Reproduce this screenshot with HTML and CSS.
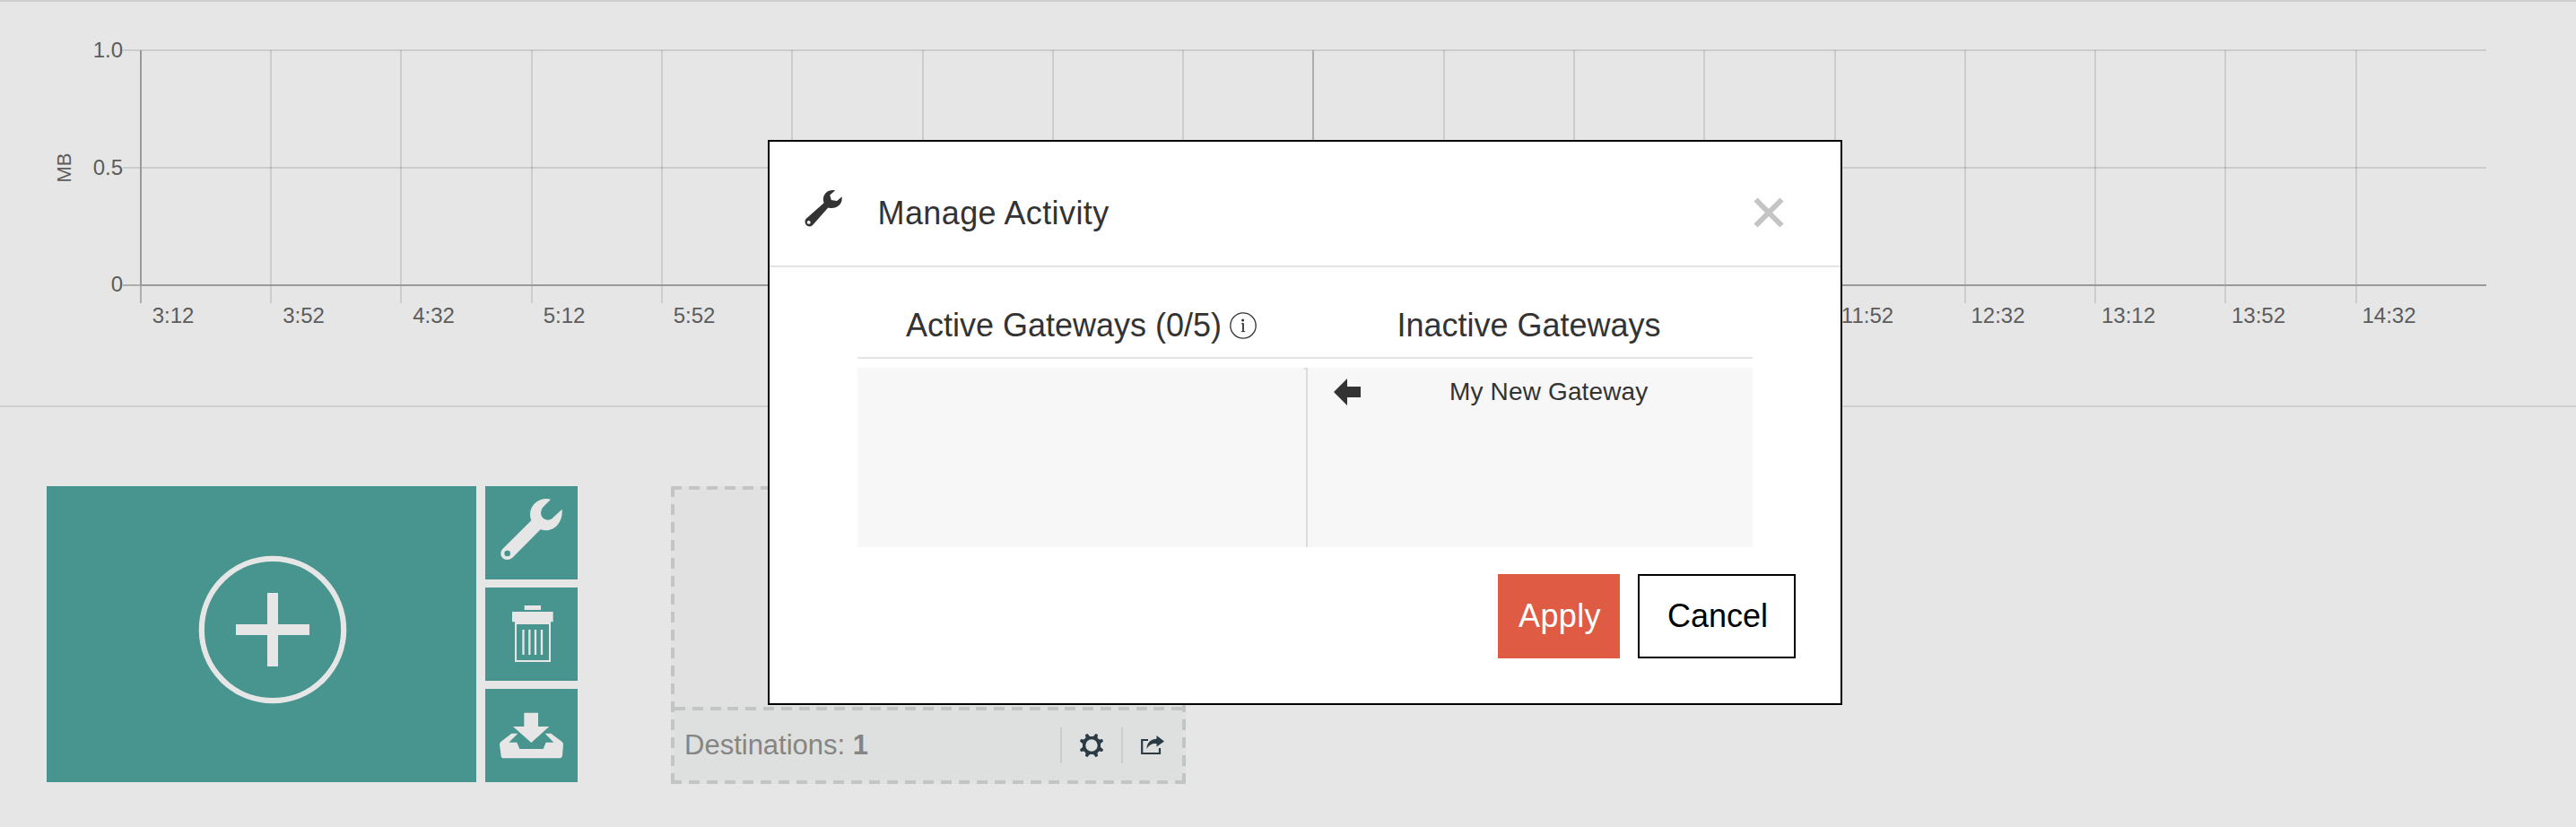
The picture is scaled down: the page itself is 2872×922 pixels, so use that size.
FILE: index.html
```html
<!DOCTYPE html>
<html lang="en">
<head>
<meta charset="utf-8">
<title>Manage Activity</title>
<link rel="stylesheet" href="styles.css">
</head>
<body>
<section class="chart-section">
  <svg class="chart" viewBox="0 0 2872 450" width="2872" height="450">
    <g class="grid">
      <path d="M137 54H2772M137 185H2772"/>
      <path d="M302 54V336M447 54V336M593 54V336M738 54V336M883 54V336M1029 54V336M1174 54V336M1319 54V336M1610 54V336M1755 54V336M1900 54V336M2046 54V336M2191 54V336M2336 54V336M2481 54V336M2627 54V336"/>
    </g>
    <path class="tick" d="M137 316H157M157 316V336M1464 54V336"/>
    <path class="axis" d="M157 54V316M157 316H2772"/>
    <g class="label y-label">
      <text x="137" y="62">1.0</text>
      <text x="137" y="193">0.5</text>
      <text x="137" y="323">0</text>
    </g>
    <text class="label unit" transform="translate(78.500 185) rotate(-90)">MB</text>
    <g class="label x-label">
      <text x="193" y="358">3:12</text>
      <text x="338.500" y="358">3:52</text>
      <text x="483.500" y="358">4:32</text>
      <text x="629" y="358">5:12</text>
      <text x="774" y="358">5:52</text>
      <text x="2082" y="358">11:52</text>
      <text x="2227.500" y="358">12:32</text>
      <text x="2373" y="358">13:12</text>
      <text x="2518" y="358">13:52</text>
      <text x="2663.500" y="358">14:32</text>
    </g>
  </svg>
</section>

<main class="board">
  <div class="gateway-tools">
    <div class="tile tile-add">
      <svg viewBox="0 0 166 166" width="166" height="166">
        <circle cx="83" cy="83" r="79.200" fill="none" stroke="#e6e6e6" stroke-width="6.200"/>
        <path d="M77 42H89V77H124V89H89V124H77V89H42V77H77Z" fill="#e6e6e6"/>
      </svg>
    </div>
    <div class="tile-column">
      <div class="tile">
        <svg viewBox="3 36 309 311"><path fill="#e6e6e6" fill-rule="evenodd" d="M222 80C190 71 154 93 153 130Q153 142 157 151L61 246C49 259 55 282 77 282Q86 282 94 275L188 181C226 193 264 164 260 113L226 145C211 156 184 143 190 119Q191 112 197 106ZM77 251A10 10 0 1 0 77 271A10 10 0 1 0 77 251Z"/></svg>
      </div>
      <div class="tile">
        <svg viewBox="3 375 309 311"><path fill="#e6e6e6" d="M134 435H189V450H134ZM93 456H230V490H222V624H102V490H93ZM108 498V618H216V498Z" fill-rule="evenodd"/><path stroke="#e6e6e6" stroke-width="7" d="M130.500 516V600M151 516V600M171 516V600M192 516V600"/></svg>
      </div>
      <div class="tile">
        <svg viewBox="3 715 309 311"><path fill="#e6e6e6" d="M133 795H180V841H217L157 895L96 841H133ZM91 864H112L82 894H109L118 916H197L206 894H232L203 864H223L260 892Q264 896 264 901L261 938Q260 947 252 947H65Q57 947 56 939L51 901Q51 896 55 892Z"/></svg>
      </div>
    </div>
  </div>

  <div class="destination-card">
    <div class="card-body"></div>
    <div class="card-footer">
      <span class="destinations">Destinations: <b>1</b></span>
      <span class="card-action">
        <svg viewBox="-14 -14 28 28" width="28" height="28" fill="#2c3a44">
          <path fill-rule="evenodd" d="M-2 -10L-4.500 -13L-7 -12L-6.500 -8.500L-8.500 -6.500L-12 -7L-13 -4.500L-10 -2V2L-13 4.500L-12 7L-8.500 6.500L-6.500 8.500L-7 12L-4.500 13L-2 10H2L4.500 13L7 12L6.500 8.500L8.500 6.500L12 7L13 4.500L10 2V-2L13 -4.500L12 -7L8.500 -6.500L6.500 -8.500L7 -12L4.500 -13L2 -10ZM0 -6.700A6.700 6.700 0 1 0 0 6.700A6.700 6.700 0 1 0 0 -6.700Z"/>
        </svg>
      </span>
      <span class="card-action">
        <svg viewBox="0 0 28 24" width="28" height="24">
          <path fill="none" stroke="#2c3a44" stroke-width="2.200" d="M9 6H2.200V21H22V15"/>
          <path fill="#2c3a44" d="M18.500 1L27 7.500L18.500 13.500V10C13.500 9.700 10 11.500 7.500 16C7.500 9.500 11.500 4.800 18.500 4.700Z"/>
        </svg>
      </span>
    </div>
  </div>
</main>

<div class="modal" role="dialog">
  <header class="modal-header">
    <svg class="title-icon" viewBox="50 75 214 210" width="42" height="42"><path fill="#333" fill-rule="evenodd" d="M224 80C190 71 158 93 156 130Q156 142 160 151L58 241C46 254 55 285 80 284Q89 284 97 275L184 177C226 189 268 164 262 115L234 139L202 134L194 106ZM74 251A10 10 0 1 0 74 271A10 10 0 1 0 74 251Z"/></svg>
    <h1>Manage Activity</h1>
    <svg class="close" viewBox="0 0 34 34" width="34" height="34"><path stroke="#c4c4c4" stroke-width="6" d="M2.500 2.500L31.500 31.500M31.500 2.500L2.500 31.500"/></svg>
  </header>
  <div class="modal-content">
    <div class="headings">
      <h2>Active Gateways (0/5)
        <svg class="info" viewBox="0 0 30 30" width="30" height="30"><circle cx="15" cy="15" r="14.200" fill="none" stroke="#333" stroke-width="1.300"/><circle cx="14.600" cy="9" r="1.500" fill="#333"/><path stroke="#333" stroke-width="1.800" fill="none" d="M15 12.300V21.500"/><path stroke="#333" stroke-width="1" fill="none" d="M12.800 12.800H15M12.800 21.600H17.200"/></svg>
      </h2>
      <h2>Inactive Gateways</h2>
    </div>
    <div class="lists">
      <div class="list list-active"></div>
      <div class="list list-inactive">
        <div class="gateway">
          <svg viewBox="0 0 30 30" width="30" height="30"><path fill="#333" d="M0 15L15 0V9H30V21H15V30Z"/></svg>
          <span>My New Gateway</span>
        </div>
      </div>
    </div>
  </div>
  <footer class="modal-footer">
    <button class="btn btn-apply">Apply</button>
    <button class="btn btn-cancel">Cancel</button>
  </footer>
</div>
</body>
</html>
```
FILE: styles.css
```css
* {
  box-sizing: border-box;
}

body {
  margin: 0;
  height: 922px;
  overflow: hidden;
  background: #e6e6e6;
  color: #333;
  font-family: "Liberation Sans", Arial, sans-serif;
}

svg {
  display: block;
}

.chart-section {
  height: 454px;
  border-top: 2px solid #cecece;
  border-bottom: 2px solid #cecece;
}

.grid path {
  fill: none;
  stroke: rgba(0, 0, 0, 0.11);
  stroke-width: 2;
}

.tick,
.axis {
  fill: none;
  stroke: #adadad;
  stroke-width: 2;
}

.axis {
  stroke: #999;
}

.label {
  fill: #5c5c5c;
  font-size: 24px;
}

.y-label {
  text-anchor: end;
}

.x-label {
  text-anchor: middle;
}

.unit {
  font-size: 22px;
  text-anchor: middle;
}

.board {
  display: flex;
  gap: 104px;
  padding: 88px 52px 0;
}

.gateway-tools {
  display: flex;
  gap: 10px;
  height: 330px;
}

.tile {
  background: #48948f;
}

.tile-add {
  width: 479px;
  padding: 77px 0 0 169px;
}

.tile-column {
  display: flex;
  flex-direction: column;
  gap: 9.500px;
  width: 103px;
}

.tile-column .tile {
  height: 103.660px;
}

.destination-card {
  display: flex;
  flex-direction: column;
  width: 574px;
  height: 332px;
  padding: 4px;
  background:
    repeating-linear-gradient(90deg, #c3c4c4 0 12px, transparent 12px 20.070px) 0 0 / 100% 4px no-repeat,
    repeating-linear-gradient(90deg, #c3c4c4 0 12px, transparent 12px 20.070px) 0 100% / 100% 4px no-repeat,
    repeating-linear-gradient(180deg, #c3c4c4 0 12px, transparent 12px 20px) 0 0 / 4px 100% no-repeat,
    repeating-linear-gradient(180deg, #c3c4c4 0 12px, transparent 12px 20px) 100% 0 / 4px 100% no-repeat,
    #e1e1e1;
}

.card-body {
  height: 242px;
}

.card-footer {
  display: flex;
  align-items: center;
  height: 82px;
  padding: 4px 0 0 11px;
  background:
    repeating-linear-gradient(90deg, #c3c4c4 0 12px, transparent 12px 19.790px) 0 0 / 100% 4px no-repeat,
    #dde0df;
}

.destinations {
  flex: 1;
  color: #858585;
  font-size: 31px;
}

.card-action {
  display: flex;
  align-items: center;
  justify-content: center;
  width: 68px;
  height: 40px;
  border-left: 2px solid #cbcdcd;
}

.modal {
  position: absolute;
  left: 856px;
  top: 156px;
  width: 1198px;
  height: 630px;
  border: 2px solid #000;
  background: #fff;
}

.modal-header {
  display: flex;
  align-items: center;
  height: 140px;
  padding: 0 63px 0 39px;
  border-bottom: 2px solid #e3e3e3;
}

.title-icon {
  margin-top: 9px;
}

h1,
h2 {
  margin: 0;
  font-size: 36px;
  font-weight: 400;
  line-height: 42px;
}

h1 {
  flex: 1;
  padding: 21px 0 0 39.500px;
  letter-spacing: 0.400px;
}

.close {
  margin-top: 20px;
}

.modal-content {
  padding: 44px 98px 0;
}

.headings {
  display: grid;
  grid-template-columns: 1fr 1fr;
  height: 58px;
  border-bottom: 2px solid #e3e3e3;
}

h2 {
  display: flex;
  align-items: center;
  justify-content: center;
  gap: 9px;
}

.headings h2 {
  height: 42px;
}

.lists {
  display: flex;
  height: 200px;
  margin-top: 10px;
  background: #f7f7f7;
}

.list-active {
  width: 500px;
  background: linear-gradient(#dcdcdc, #dcdcdc) 100% 0 / 2px 2px no-repeat;
}

.list-inactive {
  width: 498px;
  border-left: 2px solid #dcdcdc;
}

.gateway {
  display: flex;
  align-items: center;
  gap: 99px;
  height: 54px;
  padding: 0 0 0 29px;
  font-size: 28px;
  letter-spacing: 0.150px;
}

.modal-footer {
  display: flex;
  justify-content: flex-end;
  gap: 20px;
  padding: 30px 50px 0 0;
}

.btn {
  height: 94px;
  padding: 0;
  border: 0;
  font: 36px "Liberation Sans", Arial, sans-serif;
}

.btn-apply {
  width: 136px;
  padding-left: 2px;
  background: #df5b43;
  color: #fff;
  letter-spacing: 0.400px;
}

.btn-cancel {
  width: 176px;
  padding-left: 2px;
  border: 2px solid #000;
  background: #fff;
  color: #000;
}
```
